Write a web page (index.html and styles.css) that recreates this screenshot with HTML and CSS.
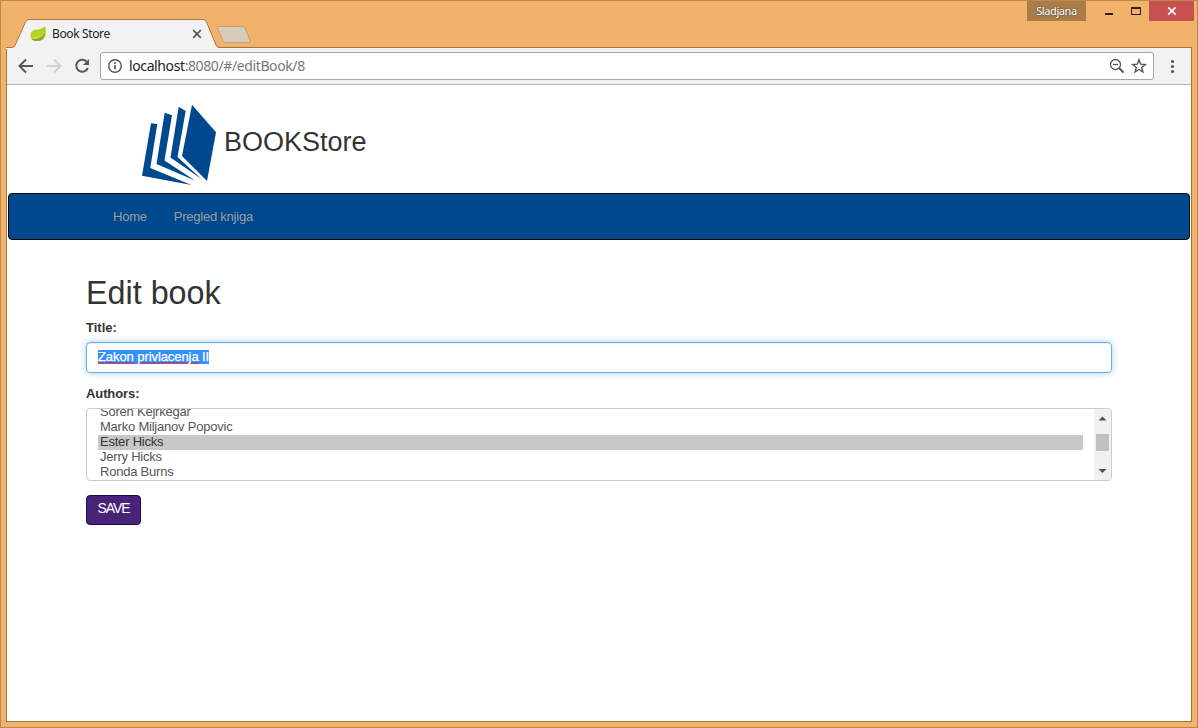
FILE: index.html
```html
<!DOCTYPE html>
<html lang="en">
<head>
<meta charset="utf-8">
<title>Book Store</title>
<link rel="stylesheet" href="styles.css">
</head>
<body>
<div class="window">
  <header class="titlebar">
    <div class="tab">
      <svg class="tab-shape" width="246" height="30" viewBox="0 0 246 30">
        <path d="M0 28.5H6Q8 28.5 9 26.500L19.500 3Q20.500 .5 23 .5H197Q199.500 .5 200.500 3L210 26Q211 28.500 213 28.500V30H0Z" fill="#f2f2f2"/>
        <path d="M0 28.500H6Q8 28.500 9 26.500L19.500 3Q20.500 .5 23 .5H197Q199.500 .5 200.500 3L210 26Q211 28.500 213 28.500" fill="none" stroke="#aa7842"/>
        <path d="M212.500 7.500H236Q238.500 7.500 239.500 10L244 21.500Q244.800 23.500 242.500 23.500H220Q217.500 23.500 216.500 21L211.500 9Q211 7.500 212.500 7.500Z" fill="#d8cbba" stroke="#c89d70"/>
      </svg>
      <svg class="leaf" width="17" height="16" viewBox="0 0 17 16">
        <path d="M15 0C16.500 5 16.500 10 13.500 13C10.500 15.500 5 15.500 2 13.500C0 12 0 8.500 1.500 6C4 2.500 11 4.500 15 0Z" fill="#b9d126"/>
        <path d="M1.500 13C8 13.500 12.500 11 14.500 6.500C15 10.500 13.500 14.500 7.500 15C5 15.200 3 14.700 1.500 13Z" fill="#8aa823"/>
        <path d="M2 12C8 12.500 12 10 14 6" fill="none" stroke="#dfe97c" stroke-width=".8"/>
      </svg>
      <span class="tab-title">Book Store</span>
      <svg class="tab-close" width="10" height="10" viewBox="0 0 10 10"><path d="M1.200 1.200 8.800 8.800M8.800 1.200 1.200 8.800" stroke="#555" stroke-width="1.700"/></svg>
    </div>
    <div class="controls">
      <span class="user">Sladjana</span>
      <svg class="minmax" width="63" height="20" viewBox="0 0 63 20"><path d="M19 12h8v2h-8z" fill="#30200c"/><path d="M45 6h10v8H45zM46 8v5h8V8z" fill="#30200c" fill-rule="evenodd"/></svg>
      <span class="close"><svg width="10" height="10" viewBox="0 0 10 10"><path d="M1.200 1.400 8.600 8.600M8.600 1.400 1.200 8.600" stroke="#fff" stroke-width="1.700"/></svg></span>
    </div>
  </header>
  <div class="browser">
    <div class="toolbar">
      <svg width="93" height="36" viewBox="0 0 93 36" fill="none" stroke-width="2">
        <path d="M26 18H13M19 11.500 12.500 18 19 24.500" stroke="#555"/>
        <path d="M40 18H53M47 11.500 53.500 18 47 24.500" stroke="#d2d2d2"/>
        <path d="M79.500 13.500A6 6 0 1 0 80.800 20" stroke="#555"/>
        <path d="M82 11V17H76Z" fill="#555"/>
      </svg>
      <div class="omnibox">
        <svg width="16" height="16" viewBox="0 0 16 16"><circle cx="8" cy="8" r="6.300" fill="none" stroke="#555" stroke-width="1.400"/><path d="M7.200 7h1.600v4.500H7.200zM7.200 4.300h1.600v1.600H7.200z" fill="#555"/></svg>
        <span class="url"><b>localhost</b>:8080/#/editBook/8</span>
        <svg class="actions" width="38" height="18" viewBox="0 0 38 18" fill="none" stroke="#555">
          <circle cx="6.500" cy="7.500" r="5" stroke-width="1.300"/><path d="M4 7.500H9" stroke-width="1.300"/><path d="M10 11 14.500 15.500" stroke-width="1.800"/>
          <path d="M30 2.800 31.700 7.200 36.300 7.500 32.700 10.500 33.900 15 30 12.500 26.100 15 27.300 10.500 23.700 7.500 28.300 7.200Z" stroke-width="1.400"/>
        </svg>
      </div>
      <svg width="37" height="36" viewBox="0 0 37 36" fill="#555"><circle cx="18.500" cy="13.500" r="1.600"/><circle cx="18.500" cy="18.500" r="1.600"/><circle cx="18.500" cy="23.500" r="1.600"/></svg>
    </div>
    <main class="page">
      <div class="brand">
        <svg width="76" height="82" viewBox="0 0 76 82" fill="#00498e">
          <path d="M51 .7 75 28.300 66 77 41 52Z"/>
          <path d="M37.700 2.700 44.700 7 36.500 53 60.500 75 29.500 53.500Z"/>
          <path d="M23.700 8.700 31 11.300 23.500 56.500 54 76.500 15.500 60Z"/>
          <path d="M10 19.300 16.300 20 9.300 64 50.500 81 1 71.700Z"/>
        </svg>
        <span class="brand-name">BOOKStore</span>
      </div>
      <nav class="navbar"><a>Home</a><a>Pregled knjiga</a></nav>
      <section class="form">
        <h1>Edit book</h1>
        <label>Title:</label>
        <div class="field"><span class="selection"><span class="misspelled">Zakon</span> <span class="misspelled">privlacenja</span> II</span></div>
        <label class="authors-label">Authors:</label>
        <div class="list">
          <div class="options">
            <div>Soren Kejrkegar</div>
            <div>Marko Miljanov Popovic</div>
            <div class="selected">Ester Hicks</div>
            <div>Jerry Hicks</div>
            <div>Ronda Burns</div>
          </div>
          <div class="scrollbar">
            <svg width="17" height="71" viewBox="0 0 17 71"><path d="M4.500 11.500 8.500 7.500 12.500 11.500ZM4.500 60 8.500 64 12.500 60Z" fill="#505050"/><path d="M2 25H15V42H2Z" fill="#c1c1c1"/></svg>
          </div>
        </div>
        <button class="save">SAVE</button>
      </section>
    </main>
  </div>
</div>
</body>
</html>
```

FILE: styles.css
```css
* { box-sizing: border-box; }
body { margin: 0; font-family: "Liberation Sans", Arial, sans-serif; font-size: 13px; color: #333; overflow: hidden; }
svg { display: block; flex: none; }
.window { width: 1198px; height: 728px; border: 1px solid #bd8848; background: #f1b36b; display: flex; flex-direction: column; padding: 0 5px 5px; }
.titlebar { height: 46px; flex: none; display: flex; justify-content: space-between; font-family: "Noto Sans", sans-serif; }
.tab { position: relative; z-index: 1; display: flex; align-items: center; width: 246px; height: 30px; margin-top: 18px; padding-left: 24px; color: #222; font-size: 12px; }
.tab-shape { position: absolute; left: 0; top: 0; }
.leaf, .tab-title, .tab-close { position: relative; }
.tab-title { width: 140px; margin-left: 5px; padding-bottom: 1px; letter-spacing: -.37px; }
.controls { display: flex; height: 20px; margin-right: -5px; }
.user { width: 59px; background: #aa7d48; color: #fff; font-size: 11px; line-height: 20px; text-align: center; letter-spacing: -.4px; text-shadow: 0 0 2px #333; }
.close { width: 45px; background: #c75050; display: flex; align-items: center; justify-content: center; margin-right: 3px; }
.browser { flex: 1; border: 1px solid #a57540; background: #fff; display: flex; flex-direction: column; }
.toolbar { height: 37px; background: #f2f2f2; border-bottom: 1px solid #b5b5b5; display: flex; }
.omnibox { flex: 1; height: 28px; margin-top: 4px; border: 1px solid #a6a6a6; border-radius: 3px; background: #fff; display: flex; align-items: center; padding: 0 6px; }
.url { flex: 1; margin-left: 6px; padding-bottom: 1px; font: 14px "Noto Sans", sans-serif; letter-spacing: -.39px; color: #777; }
.url b { font-weight: 400; color: #222; }
.page { flex: 1; }
.brand { height: 108px; padding: 19px 0 0 134px; display: flex; }
.brand-name { margin: 22px 0 0 7px; font-size: 27px; line-height: 32px; }
.navbar { height: 47px; margin: 0 1px; border: 1px solid #080808; border-radius: 4px; background: #00498e; color: #9d9d9d; display: flex; gap: 27px; padding-left: 104px; line-height: 45px; letter-spacing: -.23px; }
.form { width: 1026px; margin: 35px 0 0 79px; }
h1 { margin: 0; font-size: 32.3px; font-weight: 400; line-height: 36px; }
label { display: block; font-weight: 700; line-height: 18px; margin-top: 8px; }
.field { height: 31px; margin-top: 5px; border: 1px solid #66afe9; border-radius: 4px; box-shadow: inset 0 1px 1px rgba(0,0,0,.07), 0 0 7px rgba(102,175,233,.6); padding: 7px 11px; line-height: 14px; }
.selection { display: inline-block; height: 14px; background: #3390ff; color: #fff; letter-spacing: -.08px; -webkit-text-stroke: .25px #fff; }
.misspelled { display: inline-block; height: 14px; vertical-align: top; background: repeating-linear-gradient(90deg, #b0407f 0 2px, #6f62b5 2px 4px) 0 100% / 100% 2px no-repeat; }
.authors-label { margin-top: 12px; letter-spacing: -.1px; }
.list { height: 73px; margin-top: 5px; border: 1px solid #ccc; border-radius: 4px; display: flex; overflow: hidden; color: #555; }
.options { flex: 1; padding: 0 11px; margin-top: -5px; line-height: 15px; letter-spacing: -.22px; }
.options div { padding-left: 2px; height: 15px; }
.options .selected { background: linear-gradient(#c8c8c8, #c8c8c8) 0 1px no-repeat; box-shadow: 0 1px #c8c8c8; color: #333; }
.scrollbar { width: 17px; background: #f1f1f1; }
.save { display: block; width: 55px; height: 30px; margin-top: 14px; padding: 0 1px 4px 1px; border: 1px solid #1d0855; border-radius: 4px; background: #482478; color: #fff; font: 14px "Liberation Sans", Arial, sans-serif; letter-spacing: -1.1px; }
```
